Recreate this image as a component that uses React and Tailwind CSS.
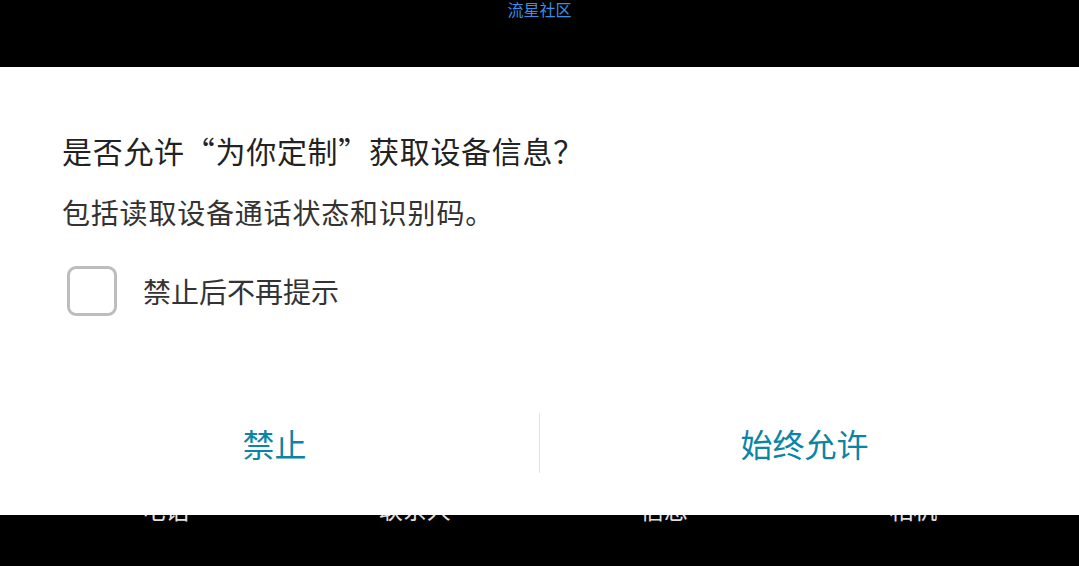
import React from "react";

const font = { fontFamily: '"Noto Sans CJK SC", "Noto Sans", sans-serif' };

function App() {
  const tabs = ["电话", "联系人", "信息", "相机"];

  return (
    <div
      lang="zh-CN"
      className="relative w-full h-[566px] bg-black overflow-hidden flex flex-col"
      style={font}
    >
      {/* top bar */}
      <div className="h-[67px] flex justify-center">
        <div className="text-[16px] leading-[18px] text-[#3a8fe4]">流星社区</div>
      </div>

      {/* page beneath the dialog */}
      <div className="flex-1" />
      <div className="grid grid-cols-4 px-[41px] mb-[45px]">
        {tabs.map((t) => (
          <div key={t} className="text-center text-[24px] leading-[24px] text-[#e0e0e0]">
            {t}
          </div>
        ))}
      </div>

      {/* permission dialog */}
      <div className="absolute left-0 right-0 top-[67px] h-[448px] bg-white flex flex-col">
        <div className="px-[62px] pt-[62px]">
          <div className="text-[30px] leading-[42px] tracking-[0.7px] text-[#222222]">
            是否允许“为你定制”获取设备信息？
          </div>
          <div className="mt-[21px] text-[28px] leading-[40px] tracking-[0.8px] text-[#333333]">
            包括读取设备通话状态和识别码。
          </div>
          <div className="mt-[34px] flex items-center">
            <div className="ml-[5px] w-[50px] h-[50px] rounded-[9px] border-[3px] border-[#bdbdbd]" />
            <div className="ml-[26px] text-[28px] leading-[40px] text-[#333333]">
              禁止后不再提示
            </div>
          </div>
        </div>

        <div className="mt-[97px] flex items-center h-[60px]">
          <button className="flex-1 pl-[10px] text-center text-[32px] leading-[44px] text-[#0a85a5]">
            禁止
          </button>
          <div className="w-px h-[60px] bg-[#e2e2e2]" />
          <button className="flex-1 pr-[10px] text-center text-[32px] leading-[44px] text-[#0a85a5]">
            始终允许
          </button>
        </div>
      </div>
    </div>
  );
}

export default App;
